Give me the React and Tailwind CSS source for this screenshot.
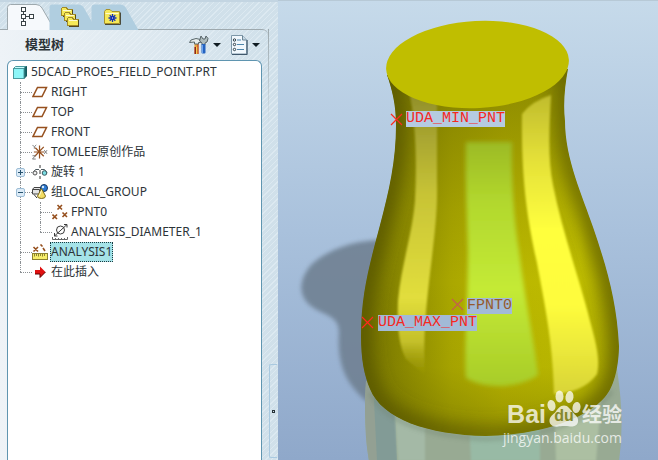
import { useState } from "react";
import clsx from "clsx";

const UI_FONT = "font-['Noto_Sans','Noto_Sans_CJK_SC',sans-serif]";

/* ---------- small icons ---------- */

const TreeTabIcon = () => (
  <svg width="14" height="20" viewBox="0 0 14 20" fill="none" stroke="#3a4448" shapeRendering="crispEdges">
    <path d="M2.5 4.5v12M4.5 9.5h5" />
    <rect x="0.5" y="0.5" width="4" height="4" fill="#fff" />
    <rect x="0.5" y="7.5" width="4" height="4" fill="#fff" />
    <rect x="0.5" y="14.5" width="4" height="4" fill="#fff" />
    <rect x="8.5" y="7.5" width="4" height="4" fill="#fff" />
  </svg>
);

const FoldersIcon = () => (
  <svg width="19" height="20" viewBox="0 0 19 20" shapeRendering="crispEdges">
    {[0, 1, 2].map((i) => (
      <g key={i} transform={`translate(${i * 3} ${i * 5})`}>
        <path d="M0.5 8.5V1.5L2 0.5h3l1.5 1.5h4.5v6.5z" fill="#f6ea58" stroke="#a08a28" />
        <path d="M2 3.5h7.5" stroke="#fffbd0" />
        <path d="M11.5 3v6H2" stroke="#55491c" fill="none" />
      </g>
    ))}
  </svg>
);

const StarFolderIcon = () => (
  <svg width="17" height="16" viewBox="0 0 17 16">
    <path d="M0.5 14.5V2.5L2 0.5h4l2 2h7.5v12z" fill="#f5e95a" stroke="#a8922c" />
    <path d="M1.5 4.500h13" stroke="#fffccf" />
    <path d="M16.5 3.5v12H1" stroke="#4a4a3a" fill="none" />
    <path d="M8.5 5v8M4.5 9h8M5.700 6.200l5.600 5.600M11.300 6.200l-5.600 5.600" stroke="#1430b4" strokeWidth="1.300" />
    <path d="M8 8.500h1v1H8z" fill="#fff" />
  </svg>
);

const ToolsIcon = () => (
  <svg width="20" height="20" viewBox="0 0 20 20">
    <path d="M5.5 9h4v10h-4z" fill="#e7a23c" />
    <path d="M5.5 12H7v7H5.500z" fill="#8e2418" />
    <path d="M7 12h1.500v7H7z" fill="#f6cf50" />
    <path d="M8.500 9h1v10h-1z" fill="#b8311c" />
    <path d="M0.500 7.500L2 5l5-1.500 4.500 1v3H9.500V9h-4V7z" fill="#e6eded" stroke="#59676a" />
    <path d="M12 1l2 3h2l1-3 2 2.500-1 3.500-2 1v2h-3V8l-2.500-2z" fill="#aebcbe" stroke="#566266" />
    <rect x="12.500" y="9" width="4" height="9.500" rx="1" fill="#2462c0" />
    <path d="M13.500 10v8" stroke="#6ea5ee" />
  </svg>
);

const ListIcon = () => (
  <svg width="17" height="20" viewBox="0 0 17 20">
    <path d="M0.500 0.500h11l4 4.500v14h-15z" fill="#f1f8fd" stroke="#7d97a8" />
    <path d="M11.500 0.500V5h4" fill="#c5d8e4" stroke="#6a8496" />
    <path d="M16.200 5v14.500H1" stroke="#40586c" fill="none" />
    <path d="M6 5h4M6 9.500h7M6 14.500h7" stroke="#4f87ad" />
    <g fill="#fff" stroke="#2a3b46">
      <circle cx="3.500" cy="5" r="1.200" />
      <circle cx="3.500" cy="9.500" r="1.200" />
      <circle cx="3.500" cy="14.500" r="1.200" />
    </g>
  </svg>
);

const CaretIcon = () => (
  <svg width="8" height="4" viewBox="0 0 8 4">
    <path d="M0 0h8L4 4z" fill="#101c22" />
  </svg>
);

const PartIcon = () => (
  <svg width="14" height="13" viewBox="0 0 14 13">
    <path d="M0.500 2.500L2.500 0.500h11l-2.500 2z" fill="#c8feff" stroke="#4a9a9e" />
    <path d="M11 2.500L13.500 0.500v9.500L11 12.500z" fill="#17686c" stroke="#17585c" />
    <rect x="0.500" y="2.500" width="10.500" height="10" fill="#8df6f8" stroke="#4a9a9e" />
  </svg>
);

const PlaneIcon = () => (
  <svg width="16" height="16" viewBox="0 0 16 16">
    <path d="M5.500 3.500h9l-4.500 9H1z" fill="#fff" stroke="#96501e" strokeWidth="1.500" />
  </svg>
);

const CsysIcon = () => (
  <svg width="17" height="16" viewBox="0 0 17 16" fill="none">
    <path d="M8 1v14M2 8h11M3.500 3.500l9 9M12.500 2.500l-9.500 10" stroke="#96501e" strokeWidth="1.300" />
    <path d="M0.500 0.500l2 2 2-2M2.500 2.500v2M13 6l3 4M16 6l-3 4M0.500 12h3l-3 3.500h3.500" stroke="#777" />
  </svg>
);

const RevolveIcon = () => (
  <svg width="16" height="16" viewBox="0 0 16 16" fill="none">
    <path d="M8 1v3M8 6v4M8 12v3" stroke="#333" />
    <path d="M1 8.500Q3 4 7 5.500M9 5.500Q13 4 15 8.500" stroke="#4c5a60" />
    <circle cx="3" cy="9" r="2" fill="#eee" stroke="#555" />
    <circle cx="12.500" cy="9" r="2.300" fill="#7bdce2" stroke="#3a5a60" />
  </svg>
);

const GroupIcon = () => (
  <svg width="16" height="16" viewBox="0 0 16 16">
    <path d="M0.500 5.500L2 3.500h7v5l-1.500 1.500h-7z" fill="#e4e4e4" stroke="#444" />
    <path d="M0.500 5.500h7v4.500" fill="none" stroke="#444" />
    <circle cx="12" cy="4" r="3.500" fill="#2a78d2" stroke="#17365e" />
    <circle cx="11" cy="3" r="1.200" fill="#d5ecff" />
    <path d="M9.500 4.500L13.500 12a4 2.500 0 0 1-8 0z" fill="#f2dc62" stroke="#7c6a1c" />
    <path d="M9.500 6.500l-2.500 6" stroke="#fffbd8" />
    <path d="M2 10.500l3 3.500" stroke="#333" />
  </svg>
);

const PointsIcon = () => (
  <svg width="16" height="16" viewBox="0 0 16 16">
    <path
      d="M5.500 1l4.500 4.500M10 1L5.500 5.500M0.500 10.500L5 15M5 10.500L0.500 15M10.500 8.500L15 13M15 8.500L10.500 13"
      stroke="#96501e"
      strokeWidth="1.600"
    />
  </svg>
);

const DiameterIcon = () => (
  <svg width="16" height="16" viewBox="0 0 16 16" fill="none" stroke="#3c3c3c">
    <circle cx="8.500" cy="6" r="4" />
    <path d="M2.500 12L15 0.500M12 0.500h3v3M2.500 9v3h3" />
    <path d="M0.500 13v2.500h15V13M3.500 14v1.500M6.500 14v1.500M9.500 14v1.500M12.500 14v1.500" stroke="#666" />
  </svg>
);

const AnalysisIcon = () => (
  <svg width="16" height="16" viewBox="0 0 16 16">
    <path d="M1.500 3L6 7.500M6 3L1.500 7.500M8.500 0.500L10.500 2.500M11 4l2 3" stroke="#96501e" strokeWidth="1.600" />
    <rect x="0.500" y="9.500" width="15" height="6" fill="#f7ee6a" stroke="#8c8230" />
    <path d="M2.500 10v2.500M4.500 10v2M6.500 10v2.500M8.500 10v2M10.500 10v2.500M12.500 10v2" stroke="#8c8230" />
  </svg>
);

const InsertIcon = () => (
  <svg width="16" height="16" viewBox="0 0 16 16">
    <path d="M3 6h5V2.500L13.500 8 8 13.500V10H3z" fill="#e01010" />
    <path d="M3 10h5v3.500L13.500 8" stroke="#5c0000" fill="none" />
  </svg>
);

/* ---------- model tree ---------- */

const ITEMS = [
  { id: "right", label: "RIGHT", icon: PlaneIcon },
  { id: "top", label: "TOP", icon: PlaneIcon },
  { id: "front", label: "FRONT", icon: PlaneIcon },
  { id: "csys", label: "TOMLEE原创作品", icon: CsysIcon },
  { id: "revolve", label: "旋转 1", icon: RevolveIcon, children: [] },
  {
    id: "group",
    label: "组LOCAL_GROUP",
    icon: GroupIcon,
    children: [
      { id: "fpnt0", label: "FPNT0", icon: PointsIcon },
      { id: "diameter", label: "ANALYSIS_DIAMETER_1", icon: DiameterIcon },
    ],
  },
  { id: "analysis1", label: "ANALYSIS1", icon: AnalysisIcon },
  { id: "insert", label: "在此插入", icon: InsertIcon },
];

const TreeItem = ({ item, selected, onSelect }) => {
  const [open, setOpen] = useState(Boolean(item.children?.length));
  const Icon = item.icon;

  return (
    <li className="relative before:absolute before:top-0 before:left-0 before:h-full before:border-l before:border-dotted before:border-[#8c9094] last:before:h-[10px]">
      <div className="flex h-5 items-center">
        <span className="w-3 shrink-0 border-t border-dotted border-[#8c9094]" />
        {item.children && (
          <button
            type="button"
            aria-label={open ? "Collapse" : "Expand"}
            onClick={() => setOpen(!open)}
            className="absolute top-[6px] -left-1 flex size-[9px] items-center justify-center rounded-[2px] border border-[#9dbdd6] bg-[#dcebf7]"
          >
            <svg width="5" height="5" viewBox="0 0 5 5" stroke="#24506c" shapeRendering="crispEdges">
              <path d={open ? "M0 2.500h5" : "M0 2.500h5M2.500 0v5"} />
            </svg>
          </button>
        )}
        <span className="flex w-4 shrink-0 justify-center">
          <Icon />
        </span>
        <button
          type="button"
          onClick={() => onSelect(item.id)}
          className={clsx(
            "ml-0.5 h-5 border text-xs leading-[18px] whitespace-nowrap",
            selected === item.id ? "border-dotted border-[#1c3a40] bg-[#a5e3e8]" : "border-transparent",
          )}
        >
          {item.label}
        </button>
      </div>
      {open && item.children?.length > 0 && (
        <ul className="ml-5">
          {item.children.map((child) => (
            <TreeItem key={child.id} item={child} selected={selected} onSelect={onSelect} />
          ))}
        </ul>
      )}
    </li>
  );
};

const Tab = ({ label, active, onClick, children }) => (
  <button type="button" aria-label={label} onClick={onClick} className="relative h-[25px] w-[42px]">
    <svg className="absolute top-0 left-0" width="48" height="26" viewBox="0 0 48 26">
      <path
        d="M0.500 26V3.500Q0.500 0.500 3.500 0.500H29Q33 0.500 35 4L47.500 26z"
        fill={active ? "#f6f9fc" : "#b0cee0"}
      />
      {active && (
        <path d="M0.500 26V3.500Q0.500 0.500 3.500 0.500H29Q33 0.500 35 4L47.500 25.500" fill="none" stroke="#9ea9ae" />
      )}
    </svg>
    <span className="relative flex h-full items-center justify-center">{children}</span>
  </button>
);

const ModelTreePanel = () => {
  const [tab, setTab] = useState("tree");
  const [selected, setSelected] = useState("analysis1");

  return (
    <aside className="flex w-[278px] shrink-0 flex-col border-t-2 border-[#c3d5e2] bg-[#d0e0ea] bg-[repeating-linear-gradient(135deg,transparent_0px,transparent_3px,#dce9f1_3px,#dce9f1_4px)]">
      <div className="flex pt-0.5 pl-[7px]">
        <Tab label="Model tree" active={tab === "tree"} onClick={() => setTab("tree")}>
          <TreeTabIcon />
        </Tab>
        <Tab label="Folders" active={tab === "folders"} onClick={() => setTab("folders")}>
          <FoldersIcon />
        </Tab>
        <Tab label="Favorites" active={tab === "favorites"} onClick={() => setTab("favorites")}>
          <StarFolderIcon />
        </Tab>
      </div>

      <div className="flex min-h-0 grow">
        <div className="flex min-w-0 grow flex-col rounded-tr-md border-t border-[#9ea9ae] bg-linear-to-r from-[#eef3f7] to-transparent pl-[7px]">
          <div className="flex h-[30px] items-center pr-2">
            <h1 className="grow pl-[18px] text-[13px] font-bold">模型树</h1>
            <button type="button" aria-label="Settings" className="flex items-center gap-1">
              <ToolsIcon />
              <CaretIcon />
            </button>
            <button type="button" aria-label="Show" className="ml-2.5 flex items-center gap-1">
              <ListIcon />
              <CaretIcon />
            </button>
          </div>
          <div className="mr-[6px] grow rounded-t-md border border-b-0 border-[#5f95b0] bg-white pt-px">
            <div className="flex h-5 items-center gap-1 pl-[5px]">
              <PartIcon />
              <span className="text-xs whitespace-nowrap">5DCAD_PROE5_FIELD_POINT.PRT</span>
            </div>
            <ul className="ml-3">
              {ITEMS.map((item) => (
                <TreeItem key={item.id} item={item} selected={selected} onSelect={setSelected} />
              ))}
            </ul>
          </div>
        </div>

        {/* splitter */}
        <div className="flex w-[10px] shrink-0 flex-col justify-end pb-0.5">
          <div className="mb-auto h-24 w-px bg-linear-to-b from-[#9ea9ae] to-transparent" />
          <button
            type="button"
            aria-label="Toggle panel"
            className="ml-px flex h-[94px] w-2 items-center justify-center rounded-l-xs border-y border-l border-[#a9c9e0]"
          >
            <span className="size-[3px] border border-[#263238]" />
          </button>
        </div>
      </div>
    </aside>
  );
};

/* ---------- graphics area ---------- */

const BODY =
  "M387 74C392 88 396 104 396 124C396 160 389 190 380 224C370 262 361 292 361 335C361 358 364 374 370 388C382 418 428 434 486 435C540 434 586 418 605 396C615 385 619 362 619 345C617 300 606 264 593 226C583 196 565 158 565 120C563 102 565 84 568 68Z";

const Model = () => (
  <svg className="absolute top-0 left-0" width="380" height="460" viewBox="278 0 380 460" aria-hidden="true">
    <defs>
      <linearGradient id="skin" x1="361" x2="619" y1="0" y2="0" gradientUnits="userSpaceOnUse">
        <stop offset="0" stopColor="#716f00" />
        <stop offset="0.150" stopColor="#8a8800" />
        <stop offset="0.350" stopColor="#aaa700" />
        <stop offset="0.550" stopColor="#bab600" />
        <stop offset="0.850" stopColor="#bebc00" />
        <stop offset="1" stopColor="#a09e00" />
      </linearGradient>
      <linearGradient id="rim" x1="361" x2="619" y1="0" y2="0" gradientUnits="userSpaceOnUse">
        <stop offset="0" stopColor="#5c5a00" />
        <stop offset="0.500" stopColor="#5c5a00" stopOpacity="0.600" />
        <stop offset="1" stopColor="#5c5a00" stopOpacity="0.750" />
      </linearGradient>
      <linearGradient id="shade" x1="0" x2="0" y1="90" y2="435" gradientUnits="userSpaceOnUse">
        <stop offset="0" stopColor="#5c5a00" stopOpacity="0.450" />
        <stop offset="0.350" stopColor="#5c5a00" stopOpacity="0.120" />
        <stop offset="0.550" stopColor="#5c5a00" stopOpacity="0" />
        <stop offset="0.800" stopColor="#5c5a00" stopOpacity="0.060" />
        <stop offset="1" stopColor="#4c4a00" stopOpacity="0.350" />
      </linearGradient>
      <linearGradient id="glossLeft" x1="0" x2="0" y1="98" y2="374" gradientUnits="userSpaceOnUse">
        <stop offset="0" stopColor="#94922c" />
        <stop offset="0.350" stopColor="#c8c436" />
        <stop offset="0.720" stopColor="#e2de3c" />
        <stop offset="0.880" stopColor="#c4c02a" />
        <stop offset="1" stopColor="#aaa610" stopOpacity="0" />
      </linearGradient>
      <linearGradient id="glossGreen" x1="0" x2="0" y1="140" y2="386" gradientUnits="userSpaceOnUse">
        <stop offset="0" stopColor="#9cba24" />
        <stop offset="0.250" stopColor="#b2d82e" />
        <stop offset="0.600" stopColor="#c4ea36" />
        <stop offset="1" stopColor="#a8cc28" />
      </linearGradient>
      <linearGradient id="glossRight" x1="0" x2="0" y1="94" y2="394" gradientUnits="userSpaceOnUse">
        <stop offset="0" stopColor="#c0bc2c" />
        <stop offset="0.200" stopColor="#e2de38" />
        <stop offset="0.450" stopColor="#ffff3e" />
        <stop offset="0.700" stopColor="#fefc3c" />
        <stop offset="1" stopColor="#d8d438" />
      </linearGradient>
      <filter id="soft1" x="-20%" y="-20%" width="140%" height="140%">
        <feGaussianBlur stdDeviation="1.200" />
      </filter>
      <filter id="soft2" x="-20%" y="-20%" width="140%" height="140%">
        <feGaussianBlur stdDeviation="2" />
      </filter>
      <filter id="soft8" x="-20%" y="-20%" width="140%" height="140%">
        <feGaussianBlur stdDeviation="8" />
      </filter>
      <clipPath id="bodyClip">
        <path d={BODY} />
      </clipPath>
      <clipPath id="mirrorClip">
        <path d="M366 380Q363 425 369 460H619Q625 420 617 368Z" />
      </clipPath>
    </defs>

    {/* cast shadow */}
    <path
      d="M380 239C350 240 326 250 311 264C296 282 299 300 317 309C331 316 339 318 339 332C337 362 345 382 366 400L400 420L420 300Z"
      fill="#6f8193"
      filter="url(#soft2)"
      opacity="0.900"
    />

    {/* floor reflection */}
    <g clipPath="url(#mirrorClip)">
      <path d="M360 360h270v100H360z" fill="#98aa93" />
      <path d="M364 360h8l6 100h-12z" fill="#93a093" />
      <path d="M372 360h22l3 100h-20z" fill="#829b96" />
      <path d="M394 400h31v60h-27z" fill="#a4b9a6" filter="url(#soft1)" />
      <path d="M469 420h71v40h-69z" fill="#98baa5" filter="url(#soft1)" />
      <path d="M554 400h47l-5 60h-40z" fill="#acbfa2" filter="url(#soft1)" />
      <path
        d="M370 392Q390 432 486 438Q580 434 612 390"
        fill="none"
        stroke="#6f826f"
        strokeWidth="4"
        opacity="0.400"
        filter="url(#soft2)"
      />
    </g>

    <g clipPath="url(#bodyClip)">
      <path d={BODY} fill="url(#skin)" />
      <path d={BODY} fill="url(#shade)" />
      <path d={BODY} fill="none" stroke="url(#rim)" strokeWidth="20" filter="url(#soft8)" />
      <path
        d="M409 90C416 120 417 160 415 200C412 235 401 265 398 300C397 325 399 345 406 358L425 374C423 340 426 310 428 290C433 245 438 215 437 180V90Z"
        fill="url(#glossLeft)"
        filter="url(#soft1)"
      />
      <path
        d="M466 141H512C511 180 514 220 519 250C525 300 534 340 538 374C518 388 484 388 466 377C464 350 468 300 468 250C467 210 465 175 466 141Z"
        fill="url(#glossGreen)"
        filter="url(#soft2)"
      />
      <path
        d="M522 113Q532 100 551 94C549 130 548 160 553 184C562 230 580 280 590 320C597 345 600 360 597 373C588 386 572 392 554 393C553 340 544 300 537 262C528 222 521 180 522 113Z"
        fill="url(#glossRight)"
        filter="url(#soft1)"
      />
    </g>

    <ellipse cx="477.500" cy="63.500" rx="91.500" ry="43.500" fill="#c0be00" transform="rotate(-3 477.500 63.500)" />

    {/* datum points */}
    <path
      d="M391 113l11 11M402 113l-11 11M362 316l11 11M373 316l-11 11"
      stroke="#ff2a1c"
      strokeWidth="1.200"
      fill="none"
    />
    <path d="M452 298l11 11M463 298l-11 11" stroke="#c4604c" strokeWidth="1.200" fill="none" />
  </svg>
);

const PointTag = ({ className, children }) => (
  <span
    className={clsx(
      "absolute font-['Liberation_Mono',monospace] text-[15px] leading-4 whitespace-nowrap",
      className,
    )}
  >
    {children}
  </span>
);

const Watermark = () => (
  <div className="absolute right-9 bottom-3 text-white/75">
    <div className="flex h-9 items-end justify-end">
      <span className="font-['Liberation_Sans',sans-serif] text-[25px] leading-7 font-bold">Bai</span>
      <span className="relative">
        <svg width="36" height="38" viewBox="0 0 36 38" fill="currentColor">
          <ellipse cx="5.500" cy="15.500" rx="4" ry="5.500" transform="rotate(-12 5.500 15.500)" />
          <ellipse cx="13.500" cy="6.500" rx="4" ry="6" />
          <ellipse cx="23.500" cy="7" rx="4" ry="6" transform="rotate(8 23.500 7)" />
          <ellipse cx="30.500" cy="17.500" rx="4" ry="5.500" transform="rotate(12 30.500 17.500)" />
          <path d="M18 15.500c4 0 6 3.500 8.500 6.500s6.500 5 5.500 10c-1 4-5 5-8 4.500c-3-0.800-9-0.800-12 0c-4 0.800-8-1-8.500-5c-0.500-5 4-7 6-9.500c2.500-3.500 4.500-6.500 8.500-6.500z" />
        </svg>
        <span className="absolute inset-x-0 bottom-1 text-center font-['Liberation_Sans',sans-serif] text-base leading-4 font-bold text-[#85882a]">
          du
        </span>
      </span>
      <span className="font-['Noto_Sans_CJK_SC',sans-serif] text-[20px] leading-7 font-bold">经验</span>
    </div>
    <div className="text-right font-['Open_Sans',sans-serif] text-[14px] leading-5">jingyan.baidu.com</div>
  </div>
);

const GraphicsArea = () => (
  <main className="relative grow overflow-hidden border-t border-[#b7c9d6] bg-linear-to-b from-[#c6daea] via-[#a9c1dc] to-[#8fa8ca]">
    <Model />
    <PointTag className="top-[110px] left-32 bg-[#b5cbe1] text-[#f5291f]">UDA_MIN_PNT</PointTag>
    <PointTag className="top-[297px] left-[189px] bg-[#a2bad7] text-[#95592c]">FPNT0</PointTag>
    <PointTag className="top-[314px] left-[100px] bg-[#a2bad7] text-[#f5291f]">UDA_MAX_PNT</PointTag>
    <Watermark />
  </main>
);

const App = () => (
  <div className={clsx("flex h-screen overflow-hidden text-[#2c3338]", UI_FONT)}>
    <ModelTreePanel />
    <GraphicsArea />
  </div>
);

export default App;
